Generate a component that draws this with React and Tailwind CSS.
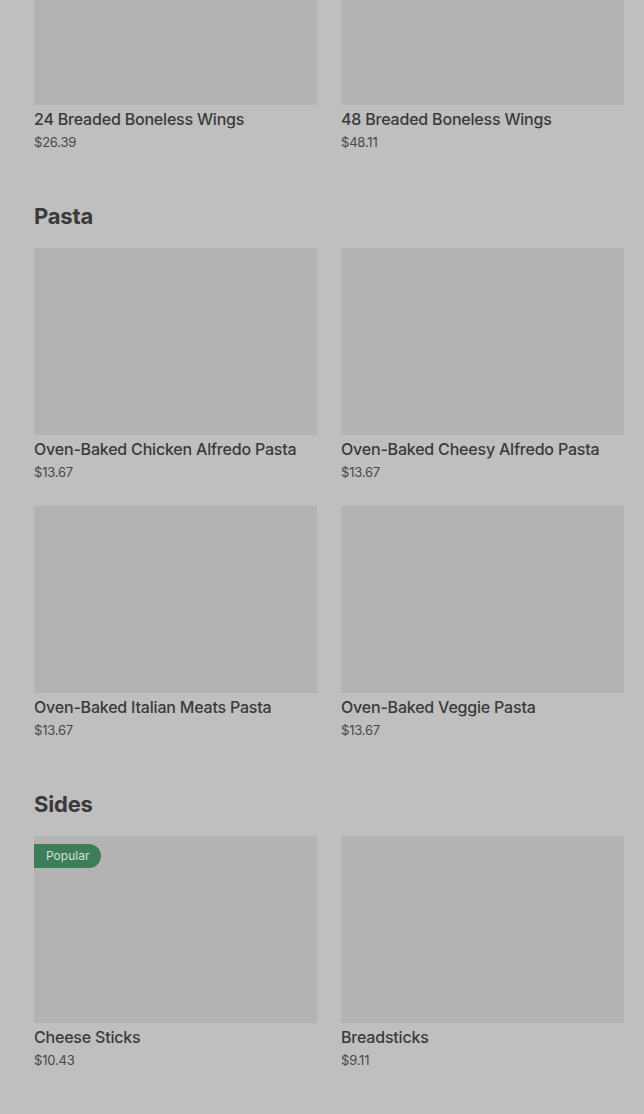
import React from "react";

const sections = [
  {
    title: null,
    items: [
      { name: "24 Breaded Boneless Wings", price: "$26.39" },
      { name: "48 Breaded Boneless Wings", price: "$48.11" },
    ],
  },
  {
    title: "Pasta",
    items: [
      { name: "Oven-Baked Chicken Alfredo Pasta", price: "$13.67" },
      { name: "Oven-Baked Cheesy Alfredo Pasta", price: "$13.67" },
      { name: "Oven-Baked Italian Meats Pasta", price: "$13.67" },
      { name: "Oven-Baked Veggie Pasta", price: "$13.67" },
    ],
  },
  {
    title: "Sides",
    items: [
      { name: "Cheese Sticks", price: "$10.43", popular: true },
      { name: "Breadsticks", price: "$9.11" },
    ],
  },
];

function ItemCard({ item }) {
  return (
    <div className="flex flex-col">
      <div className="relative h-[187px] bg-[#b3b3b3]">
        {item.popular && (
          <span className="absolute left-0 top-[8px] h-6 pl-3 pr-3 flex items-center rounded-r-full bg-[#3e7d59] text-[12px] text-[#cfe3d6]">
            Popular
          </span>
        )}
      </div>
      <div className="mt-[2px] text-[16px] leading-6 font-medium tracking-[-0.2px] text-[#3a3a3a]">{item.name}</div>
      <div className="mt-[1px] text-[13px] leading-5 tracking-[-0.2px] text-[#484848]">{item.price}</div>
    </div>
  );
}

export default function App() {
  return (
    <div
      className="min-h-[1114px] bg-[#bfbfbf] overflow-hidden"
      style={{ fontFamily: "Inter, 'Noto Sans', sans-serif" }}
    >
      <div className="pl-[34px] pr-[20px] -mt-[82px] flex flex-col">
        {sections.map((s, i) => (
          <div key={i} className={i === 0 ? "" : "mt-[50px]"}>
            {s.title && (
              <h2 className="text-[22px] leading-7 font-bold text-[#3a3a3a] mb-[18px] tracking-[-0.2px]">
                {s.title}
              </h2>
            )}
            <div className="grid grid-cols-2 gap-x-6 gap-y-6">
              {s.items.map((it) => (
                <ItemCard key={it.name} item={it} />
              ))}
            </div>
          </div>
        ))}
      </div>
    </div>
  );
}
